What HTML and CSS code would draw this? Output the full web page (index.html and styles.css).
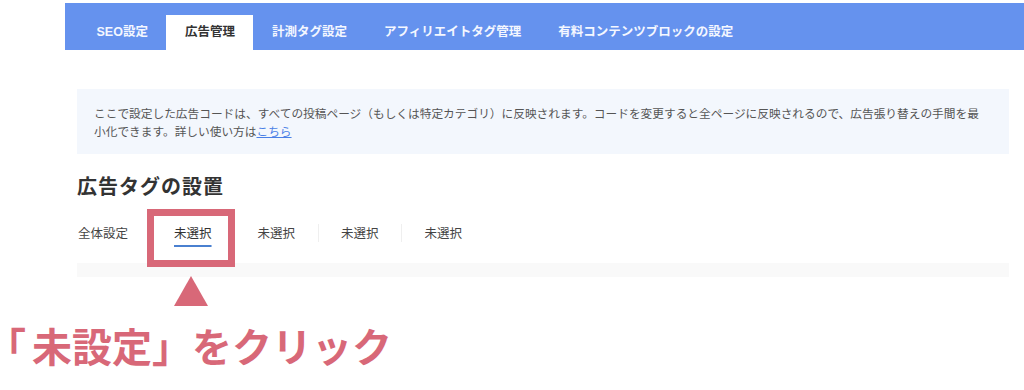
FILE: index.html
```html
<!DOCTYPE html>
<html lang="ja">
<head>
<meta charset="utf-8">
<title>広告管理</title>
<link rel="stylesheet" href="styles.css">
</head>
<body>
<div class="page">
  <nav class="topbar">
    <a class="tab">SEO設定</a>
    <a class="tab active">広告管理</a>
    <a class="tab">計測タグ設定</a>
    <a class="tab">アフィリエイトタグ管理</a>
    <a class="tab">有料コンテンツブロックの設定</a>
  </nav>
  <main class="content">
    <div class="info">ここで設定した広告コードは、すべての投稿ページ（もしくは特定カテゴリ）に反映されます。コードを変更すると全ページに反映されるので、広告張り替えの手間を最小化できます。詳しい使い方は<a class="link">こちら</a></div>
    <h2 class="heading">広告タグの設置</h2>
    <div class="subtabs">
      <span class="subtab first">全体設定</span>
      <span class="subtab active">未選択</span>
      <span class="subtab">未選択</span>
      <span class="subtab">未選択</span>
      <span class="subtab">未選択</span>
    </div>
    <div class="panel"></div>
  </main>
  <p class="annot-text"><span class="bracket">「</span>未設定」をクリック</p>
  <div class="highlight"></div>
  <div class="arrow"></div>
</div>
</body>
</html>
```

FILE: styles.css
```css
html, body {
  margin: 0;
  padding: 0;
  background: #fff;
}
body {
  font-family: "Liberation Sans", "Noto Sans CJK JP", sans-serif;
  width: 1024px;
  height: 390px;
  overflow: hidden;
}
.page {
  position: relative;
  height: 390px;
}
.topbar {
  margin: 3px 0 0 65px;
  height: 47px;
  background: #6592ee;
  display: flex;
  align-items: flex-end;
  padding-left: 13px;
  box-sizing: border-box;
}
.tab {
  display: block;
  height: 35px;
  line-height: 35px;
  padding: 0 18.5px;
  font-size: 12.5px;
  font-weight: 700;
  color: #f4f7ff;
  white-space: nowrap;
}
.tab.active {
  background: #fff;
  color: #333;
}
.content {
  margin: 0 15px 0 77px;
}
.info {
  margin-top: 39px;
  background: #f3f7fd;
  padding: 15px 22px 14px 17px;
  font-family: "Noto Sans CJK JP", sans-serif;
  font-size: 11.7px;
  line-height: 18px;
  color: #555;
}
.link {
  color: #4a80e6;
  text-decoration: underline;
  text-underline-offset: 1px;
}
.heading {
  margin: 18px 0 0;
  font-family: "Noto Sans CJK JP", sans-serif;
  font-size: 20px;
  line-height: 28px;
  letter-spacing: 1px;
  font-weight: 700;
  color: #333;
}
.subtabs {
  margin-top: 24px;
  display: flex;
  align-items: center;
}
.subtab {
  font-family: "Noto Sans CJK JP", sans-serif;
  font-size: 12.5px;
  line-height: 18px;
  color: #444;
  padding: 0 22.5px;
  border-left: 1px solid #efefef;
  white-space: nowrap;
}
.subtab.first {
  padding-left: 1px;
  border-left: 0;
}
.subtab.active {
  color: #333;
  text-decoration: underline;
  text-decoration-color: #4a80d0;
  text-decoration-thickness: 2px;
  text-underline-offset: 7px;
}
.panel {
  margin-top: 21px;
  height: 14px;
  background: #f9f9f9;
}
.annot-text {
  margin: 45px 0 0 6px;
  font-family: "Noto Sans CJK JP", sans-serif;
  font-size: 40px;
  line-height: 46px;
  font-weight: 700;
  color: #d86878;
  white-space: nowrap;
}
.bracket {
  font-feature-settings: "halt";
  margin-right: 6px;
}
.highlight {
  position: absolute;
  left: 147px;
  top: 206px;
  width: 74px;
  height: 44px;
  border: 7px solid #d86878;
}
.arrow {
  position: absolute;
  left: 174px;
  top: 273px;
  width: 0;
  height: 0;
  border-left: 17.5px solid transparent;
  border-right: 17.5px solid transparent;
  border-bottom: 30px solid #d86878;
}
```
